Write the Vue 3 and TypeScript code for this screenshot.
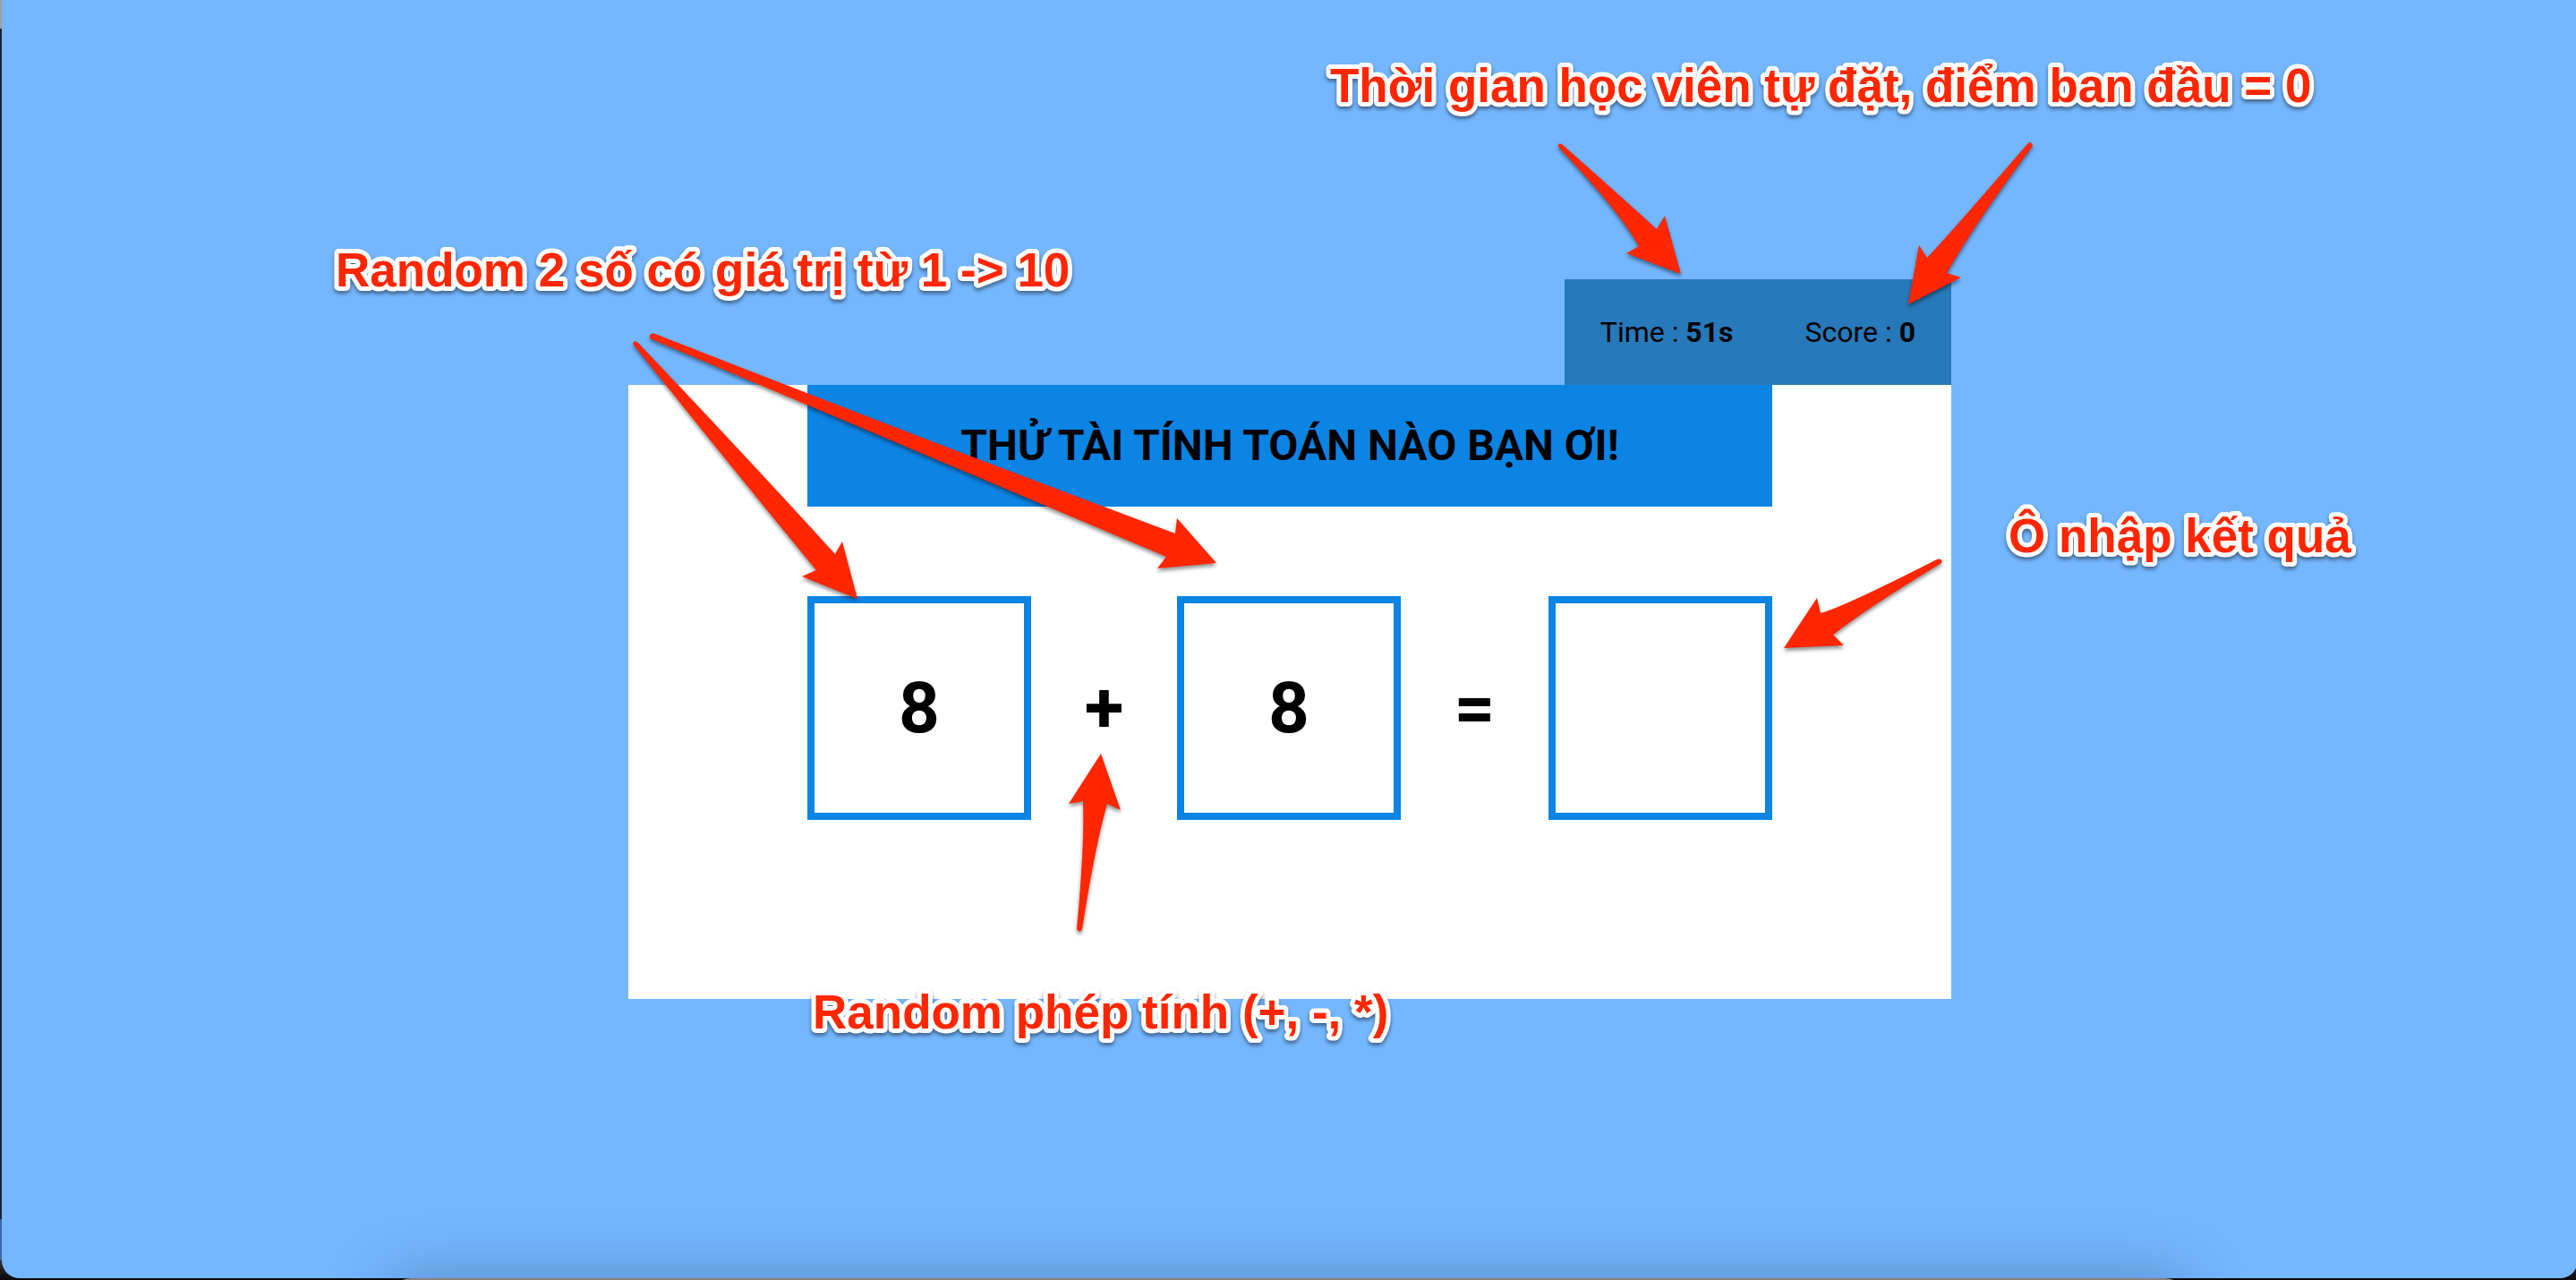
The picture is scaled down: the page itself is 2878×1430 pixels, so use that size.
<script setup lang="ts">
import { ref } from 'vue'

interface Note {
  text: string
  x: number
  y: number
}

const time = ref(51)
const score = ref(0)
const left = ref(8)
const right = ref(8)
const operator = ref('+')
const answer = ref('')

// Text origins (left edge, baseline) of the callouts around the board.
const notes: Note[] = [
  { text: 'Random 2 số có giá trị từ 1 -> 10', x: 375, y: 320 },
  { text: 'Thời gian học viên tự đặt, điểm ban đầu = 0', x: 1486, y: 114 },
  { text: 'Ô nhập kết quả', x: 2244, y: 617 },
  { text: 'Random phép tính (+, -, *)', x: 908, y: 1149 },
]

const arrows: string[] = [
  'M1741 164Q1740 159 1745 161Q1807 216 1851 256L1860 241L1878 306L1817 283L1831 275Q1810 237 1741 164Z',
  'M2265 161Q2269 156 2271 163Q2209 246 2175 305L2191 310L2132 340L2144 274L2153 288Q2184 255 2265 161Z',
  'M707 384Q708 379 713 383Q830 506 933 619L941 605L958 669L896 644L912 637Q814 518 707 384Z',
  'M726 378Q725 371 732 373Q1035 492 1313 596L1315 579L1359 629L1293 635L1303 622Q1050 515 726 378Z',
  'M2164 625Q2171 623 2169 629Q2085 680 2048 709L2060 721L1993 724L2030 668L2034 685Q2060 678 2164 625Z',
  'M1203 1038Q1206 1043 1209 1038Q1224 942 1237 898L1252 905L1230 842L1194 898L1210 895Q1212 942 1203 1038Z',
]
</script>

<template>
  <div class="desktop">
    <div class="dock"></div>
    <main class="page">
      <div class="board">
        <div class="status">
          <span class="stat">Time : <b>{{ time }}s</b></span>
          <span class="stat">Score : <b>{{ score }}</b></span>
        </div>
        <section class="card">
          <h1 class="title">THỬ TÀI TÍNH TOÁN NÀO BẠN ƠI!</h1>
          <form class="sum" @submit.prevent>
            <span class="box">{{ left }}</span>
            <span>{{ operator }}</span>
            <span class="box">{{ right }}</span>
            <span>=</span>
            <input v-model="answer" class="box" type="text" aria-label="Kết quả" />
          </form>
        </section>
        <svg class="notes" width="1478" height="804">
          <g transform="translate(-702 -312)">
            <path v-for="d in arrows" :key="d" class="arrow" :d="d" />
            <text v-for="note in notes" :key="note.text" class="note" :x="note.x" :y="note.y">{{ note.text }}</text>
          </g>
        </svg>
      </div>
    </main>
  </div>
</template>

<style>
body {
  margin: 0;
}
</style>

<style scoped>
.desktop {
  position: relative;
  display: flex;
  box-sizing: border-box;
  min-height: 100vh;
  padding: 0 0 2px 2px;
  overflow: hidden;
  background: linear-gradient(#a0a0a0 32px, #1f242c 32px, #1f242c calc(100% - 68px), #3c68a6 calc(100% - 68px), #3c68a6 calc(100% - 22px), #3a3232 calc(100% - 22px), #0e0a12 calc(100% - 2px));
}

.page {
  flex: 1;
  box-sizing: border-box;
  margin-right: -2px;
  padding: 312px 2px 0 2px;
  border-radius: 0 0 20px 20px;
  background: #74b7ff;
  color: #000;
  font-family: Roboto, sans-serif;
}

.dock {
  position: absolute;
  z-index: 1;
  right: 430px;
  bottom: -58px;
  left: 430px;
  height: 60px;
  border-radius: 30px;
  background: #8a8080;
  box-shadow: 0 0 70px rgba(0, 0, 0, 0.26);
}

.board {
  position: relative;
  width: 100%;
  max-width: 1478px;
  margin: 0 auto;
}

.status {
  display: flex;
  width: fit-content;
  margin-left: auto;
  background: #2779ba;
  font-size: 32px;
  line-height: 38px;
}

.stat {
  padding: 40px;
}

.card {
  padding: 0 200px 200px;
  background: #fff;
}

.title {
  margin: 0;
  padding: 40px 0;
  background: #0c84e4;
  font-size: 48px;
  line-height: 56px;
  font-weight: 700;
  text-align: center;
}

.sum {
  display: flex;
  align-items: center;
  justify-content: space-between;
  margin-top: 100px;
  font-size: 80px;
  line-height: 94px;
  font-weight: 700;
}

.box {
  display: flex;
  align-items: center;
  justify-content: center;
  box-sizing: border-box;
  width: 250px;
  height: 250px;
  margin: 0;
  padding: 0;
  border: 8px solid #0c84e4;
  border-radius: 0;
  outline: 0;
  background: #fff;
  font: inherit;
  text-align: center;
}

.notes {
  position: absolute;
  z-index: 2;
  top: 0;
  left: 0;
  overflow: visible;
  pointer-events: none;
}

.arrow,
.note {
  fill: #ff2600;
  filter: drop-shadow(0 3px 2px rgba(0, 0, 0, 0.45));
}

.note {
  font-family: "Liberation Sans", Arial, sans-serif;
  font-size: 53px;
  font-weight: 700;
  stroke: #fff;
  stroke-width: 10px;
  stroke-linejoin: round;
  paint-order: stroke;
}
</style>
